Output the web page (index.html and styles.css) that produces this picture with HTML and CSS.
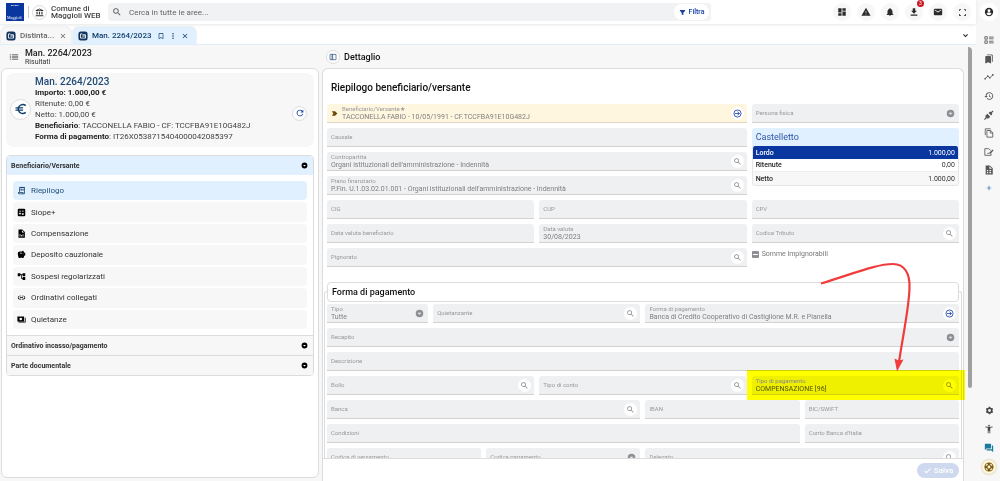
FILE: index.html
```html
<!DOCTYPE html>
<html lang="it">
<head>
<meta charset="utf-8">
<meta name="viewport" content="width=device-width, initial-scale=1">
<title>Man. 2264/2023</title>
<link rel="stylesheet" href="styles.css">
</head>
<body>
<svg class="sprite" aria-hidden="true">
  <symbol id="search" viewBox="0 0 24 24"><path d="M15.5 14h-.79l-.28-.27A6.47 6.47 0 0 0 16 9.5 6.5 6.5 0 1 0 9.5 16c1.61 0 3.09-.59 4.23-1.57l.27.28v.79l5 4.99L20.49 19zm-6 0a4.5 4.5 0 1 1 0-9 4.5 4.5 0 0 1 0 9z"/></symbol>
  <symbol id="bank" viewBox="0 0 24 24"><path d="M4 10v7h3v-7zm6.5 0v7h3v-7zM2 22h20v-3H2zM17 10v7h3v-7zM12 1 2 6v2h20V6zm0 2.3L17 6H7z"/></symbol>
  <symbol id="funnel" viewBox="0 0 24 24"><path d="M3 3h18v3l-6 7v8l-6-3v-5L3 6z"/></symbol>
  <symbol id="dash" viewBox="0 0 24 24"><path d="M3 13h8V3H3zm0 8h8v-6H3zm10 0h8V11h-8zm0-18v6h8V3z"/></symbol>
  <symbol id="warn" viewBox="0 0 24 24"><path d="M1 21h22L12 2zm12-3h-2v-2h2zm0-4h-2v-4h2z"/></symbol>
  <symbol id="bell" viewBox="0 0 24 24"><path d="M12 22a2 2 0 0 0 2-2h-4a2 2 0 0 0 2 2zm6-6v-5c0-3.07-1.64-5.64-4.5-6.32V4a1.5 1.5 0 0 0-3 0v.68C7.63 5.36 6 7.92 6 11v5l-2 2v1h16v-1z"/></symbol>
  <symbol id="download" viewBox="0 0 24 24"><path d="M19 9h-4V3H9v6H5l7 7zM4 18v3h16v-3z"/></symbol>
  <symbol id="mail" viewBox="0 0 24 24"><path d="M20 4H4a2 2 0 0 0-2 2v12c0 1.1.9 2 2 2h16a2 2 0 0 0 2-2V6a2 2 0 0 0-2-2zm0 4-8 5-8-5V6l8 5 8-5z"/></symbol>
  <symbol id="full" viewBox="0 0 24 24"><path d="M3 8V3h5v2H5v3zm13-5h5v5h-2V5h-3zM3 16h2v3h3v2H3zm16 0h2v5h-5v-2h3z"/></symbol>
  <symbol id="user" viewBox="0 0 24 24"><path d="M12 2a10 10 0 1 0 0 20 10 10 0 0 0 0-20zm0 3.500a3.500 3.500 0 1 1 0 7 3.500 3.500 0 0 1 0-7zm0 14c-2.500 0-4.700-1.300-6-3.200 0-2 4-3.100 6-3.100s6 1.100 6 3.100a7.200 7.200 0 0 1-6 3.200z"/></symbol>
  <symbol id="folder" viewBox="0 0 24 24"><rect x="1" y="1" width="22" height="22" rx="6" fill="#12355f"/><path fill="none" stroke="#fff" stroke-width="2" d="M6 7h4l2 2h6v8H6zM10 12h8"/></symbol>
  <symbol id="close" viewBox="0 0 24 24"><path d="M19 6.400 17.600 5 12 10.600 6.400 5 5 6.400l5.600 5.600L5 17.600 6.400 19l5.600-5.600 5.600 5.600 1.400-1.400-5.600-5.600z"/></symbol>
  <symbol id="mark" viewBox="0 0 24 24"><path d="M17 3H7a2 2 0 0 0-2 2v16l7-3 7 3V5a2 2 0 0 0-2-2zm0 15-5-2.200L7 18V5h10z"/></symbol>
  <symbol id="more" viewBox="0 0 24 24"><circle cx="12" cy="5" r="2.200"/><circle cx="12" cy="12" r="2.200"/><circle cx="12" cy="19" r="2.200"/></symbol>
  <symbol id="chev" viewBox="0 0 24 24"><path d="M7.400 8 12 12.600 16.600 8 18.500 9.900 12 16.400 5.500 9.900z"/></symbol>
  <symbol id="list" viewBox="0 0 24 24"><path d="M2 6h3v2H2zm5 0h15v2H7zm-5 5h3v2H2zm5 0h15v2H7zm-5 5h3v2H2zm5 0h15v2H7z"/></symbol>
  <symbol id="euro" viewBox="0 0 24 24"><path d="M15 18.500c-2.500 0-4.700-1.400-5.800-3.500H15l1-2H8.600a6 6 0 0 1 0-2H15l1-2H9.200A6.500 6.500 0 0 1 15 5.500c1.600 0 3.100.6 4.200 1.600L21 5.300A9 9 0 0 0 6.500 9H3l-1 2h4.100a9 9 0 0 0 0 2H3l-1 2h4.500A9 9 0 0 0 21 18.700l-1.800-1.800a6.400 6.400 0 0 1-4.200 1.600z"/></symbol>
  <symbol id="refresh" viewBox="0 0 24 24"><path d="M17.650 6.350A8 8 0 1 0 19.730 14h-2.080A6 6 0 1 1 12 6c1.660 0 3.140.69 4.220 1.780L13 11h7V4z"/></symbol>
  <symbol id="cdown" viewBox="0 0 24 24"><path fill-rule="evenodd" d="M12 2a10 10 0 1 0 0 20 10 10 0 0 0 0-20zM7 10h10l-5 5z"/></symbol>
  <symbol id="receipt" viewBox="0 0 24 24"><path d="M19.500 3.500 18 2l-1.500 1.500L15 2l-1.500 1.500L12 2l-1.500 1.500L9 2 7.500 3.500 6 2v14H3v3a3 3 0 0 0 3 3h12a3 3 0 0 0 3-3V2zM15 20H6a1 1 0 0 1-1-1v-1h10zm4-1a1 1 0 0 1-2 0v-3H8V5h11zM9 7h6v2H9zm7 0h2v2h-2zm-7 3h6v2H9zm7 0h2v2h-2z"/></symbol>
  <symbol id="calc" viewBox="0 0 24 24"><path fill-rule="evenodd" d="M5 2h14a3 3 0 0 1 3 3v14a3 3 0 0 1-3 3H5a3 3 0 0 1-3-3V5a3 3 0 0 1 3-3zm1 5v2h5V7zm7 0v2h5V7zm0 6v2h5v-2zm0 3v2h5v-2zm-6-4v2H5v2h2v2h2v-2h2v-2H9v-2z"/></symbol>
  <symbol id="report" viewBox="0 0 24 24"><path fill-rule="evenodd" d="M4 1h10l7 7v15H4zm9 2v6h6zM7 13v7h2v-7zm4 3v4h2v-4zm4-2v6h2v-6z"/></symbol>
  <symbol id="pig" viewBox="0 0 24 24"><path fill-rule="evenodd" d="m19.800 7.500-2.300-2.300c.1-.6.300-1.200.5-1.700A1.500 1.500 0 0 0 16.500 2c-1.600 0-3 .8-4 2h-5C4.500 4 2 6.500 2 9.500S4.500 21 4.500 21H10v-2h2v2h5.500l1.700-5.600 2.800-.9v-7zM13 9H8V7h5zm3 2a1 1 0 1 1 0-2 1 1 0 0 1 0 2z"/></symbol>
  <symbol id="tree" viewBox="0 0 24 24"><path d="M22 11V3h-7v3H9V3H2v8h7V8h2v10h4v3h7v-8h-7v3h-2V8h2v3z"/></symbol>
  <symbol id="link" viewBox="0 0 24 24"><path d="M3.900 12A3.100 3.100 0 0 1 7 8.900h4V7H7a5 5 0 0 0 0 10h4v-1.900H7A3.100 3.100 0 0 1 3.900 12zM8 13h8v-2H8zm9-6h-4v1.900h4a3.100 3.100 0 0 1 0 6.200h-4V17h4a5 5 0 0 0 0-10z"/></symbol>
  <symbol id="cash" viewBox="0 0 24 24"><path fill-rule="evenodd" d="M1 4h18v13H1zm9 3a3.500 3.500 0 1 0 0 7 3.500 3.500 0 0 0 0-7zM21 7h2v13H4v-2h17z"/></symbol>
  <symbol id="panel" viewBox="0 0 24 24"><path fill="none" stroke="currentColor" stroke-width="2" d="M3 4h18v16H3zM9 4v16M11 4v16"/></symbol>
  <symbol id="tag" viewBox="0 0 24 24"><path d="M3 4h11l8 8-8 8H3l5-8z"/></symbol>
  <symbol id="go" viewBox="0 0 24 24"><path fill="none" stroke="currentColor" stroke-width="2.200" d="M12 2.500a9.500 9.500 0 1 1 0 19 9.500 9.500 0 0 1 0-19zM5 12h12M12 7l5 5-5 5"/></symbol>
  <symbol id="check" viewBox="0 0 24 24"><path d="M9 16.200 4.800 12l-1.800 1.800 6 6L21.500 7.300l-1.800-1.800z"/></symbol>
  <symbol id="ballot" viewBox="0 0 24 24"><path fill="none" stroke="currentColor" stroke-width="2" d="M2 4h6v6H2zM2 14h6v6H2zM12 5h11M12 9h11M12 15h11M12 19h11"/></symbol>
  <symbol id="marks" viewBox="0 0 24 24"><path d="m19 18 2 1V3a2 2 0 0 0-2-2H8.500a2 2 0 0 0-2 2H17a2 2 0 0 1 2 2zM15 5H5a2 2 0 0 0-2 2v16l7-3 7 3V7a2 2 0 0 0-2-2z"/></symbol>
  <symbol id="trend" viewBox="0 0 24 24"><path fill="none" stroke="currentColor" stroke-width="2" d="m2 17 7-7 5 4 8-8"/><circle cx="3" cy="16" r="2"/><circle cx="9" cy="10" r="2"/><circle cx="14" cy="14" r="2"/><circle cx="21" cy="7" r="2"/></symbol>
  <symbol id="hist" viewBox="0 0 24 24"><path d="M13 3a9 9 0 0 0-9 9H1l3.900 3.900L9 12H6a7 7 0 1 1 2.060 4.940l-1.420 1.420A9 9 0 1 0 13 3zm-1 5v5l4.280 2.540.72-1.210-3.500-2.080V8z"/></symbol>
  <symbol id="plug" viewBox="0 0 24 24"><path d="m21 1-4 4c-2-1-4-1-5 1l-1 1 6 6 1-1c2-1 2-3 1-5l4-4zM8 9l7 7-3 3c-2 2-4 2-6 1l-4 4-2-2 4-4c-1-2-1-4 1-6z"/></symbol>
  <symbol id="copy" viewBox="0 0 24 24"><path fill="none" stroke="currentColor" stroke-width="2" d="M3 17V2h13M7 6h9l5 5v11H7zM15 6v6h6"/></symbol>
  <symbol id="sign" viewBox="0 0 24 24"><path fill="none" stroke="currentColor" stroke-width="2" d="M17 16v4H2V4h9l5 4M8 16c2-4 3 2 5-2"/><path d="m13 13 8-7 2 2-7 8h-3z"/></symbol>
  <symbol id="filecode" viewBox="0 0 24 24"><path fill-rule="evenodd" d="M4 1h10l7 7v15H4zm9 2v6h6zM7 12v3h3v-3zm6 0v3h4v-3zm-6 5v3h3v-3zm6 0v3h4v-3z"/></symbol>
  <symbol id="plus" viewBox="0 0 24 24"><path d="M19 13h-6v6h-2v-6H5v-2h6V5h2v6h6z"/></symbol>
  <symbol id="gear" viewBox="0 0 24 24"><path fill="none" stroke="currentColor" stroke-width="4.500" d="M12 6a6 6 0 1 1 0 12 6 6 0 0 1 0-12z"/><path fill="none" stroke="currentColor" stroke-width="4" d="M12 2v3M12 19v3M3.300 7l2.600 1.500M18.100 15.500l2.600 1.500M3.300 17l2.600-1.500M18.100 8.500 20.700 7"/></symbol>
  <symbol id="access" viewBox="0 0 24 24"><path d="M20.500 6a36 36 0 0 1-17 0L3 8c1.860.5 4 .830 6 1v13h2v-6h2v6h2V9c2-.17 4.140-.5 6-1zM12 6a2 2 0 1 0 0-4 2 2 0 0 0 0 4z"/></symbol>
  <symbol id="chat" viewBox="0 0 24 24"><path d="M21 6h-2v9H6v2c0 .55.45 1 1 1h11l4 4V7a1 1 0 0 0-1-1zm-4 6V3a1 1 0 0 0-1-1H3a1 1 0 0 0-1 1v14l4-4h10a1 1 0 0 0 1-1z"/></symbol>
  <symbol id="life" viewBox="0 0 24 24"><path fill-rule="evenodd" d="M12 1a11 11 0 1 0 0 22 11 11 0 0 0 0-22zm0 7.500a3.500 3.500 0 1 1 0 7 3.500 3.500 0 0 1 0-7zM9 3.500v3L6.500 9h-3A9 9 0 0 1 9 3.500zm6 0A9 9 0 0 1 20.500 9h-3L15 6.500zM3.500 15h3L9 17.500v3A9 9 0 0 1 3.500 15zm17 0a9 9 0 0 1-5.500 5.500v-3l2.500-2.500z"/></symbol>
</svg>

<div class="app">
  <div class="main">
    <header class="topbar">
      <svg class="logo" viewBox="0 0 18 18" role="img" aria-label="Maggioli">
        <rect width="18" height="18" fill="#0a36a0"/>
        <path d="M5 2.500h8" stroke="#b9c7ea" stroke-width="1" stroke-dasharray="1 .3"/>
        <text x="1" y="16" class="logo-text">Maggioli</text>
      </svg>
      <span class="rule"></span>
      <span class="round outline"><svg class="i9"><use href="#bank"/></svg></span>
      <div class="tenant">Comune di<br>Maggioli WEB</div>
      <div class="search">
        <svg class="i10"><use href="#search"/></svg>
        <input type="search" aria-label="Cerca" placeholder="Cerca in tutte le aree...">
        <button class="filter"><svg class="i7"><use href="#funnel"/></svg>Filtra</button>
      </div>
      <nav class="actions">
        <button class="round" aria-label="Dashboard"><svg class="i10"><use href="#dash"/></svg></button>
        <button class="round" aria-label="Avvisi"><svg class="i10"><use href="#warn"/></svg></button>
        <button class="round" aria-label="Notifiche"><svg class="i10"><use href="#bell"/></svg></button>
        <button class="round" aria-label="Download"><svg class="i10"><use href="#download"/></svg><span class="badge">3</span></button>
        <button class="round" aria-label="Posta"><svg class="i10"><use href="#mail"/></svg></button>
        <button class="round" aria-label="Schermo intero"><svg class="i9"><use href="#full"/></svg></button>
      </nav>
    </header>

    <div class="tabs">
      <div class="tab"><svg class="i10"><use href="#folder"/></svg><span>Distinta...</span><button aria-label="Chiudi"><svg class="i8"><use href="#close"/></svg></button></div>
      <div class="tab active"><svg class="i10"><use href="#folder"/></svg><span>Man. 2264/2023</span><button aria-label="Segnalibro"><svg class="i8"><use href="#mark"/></svg></button><button aria-label="Altro"><svg class="i8"><use href="#more"/></svg></button><button aria-label="Chiudi"><svg class="i8"><use href="#close"/></svg></button></div>
      <button class="tab-menu" aria-label="Elenco schede"><svg class="i9"><use href="#chev"/></svg></button>
    </div>

    <div class="content">
      <section class="side">
        <header class="side-head">
          <svg class="i10"><use href="#list"/></svg>
          <div><h1>Man. 2264/2023</h1><p>Risultati</p></div>
        </header>
        <div class="panel side-panel">
          <div class="card">
            <span class="round big"><svg class="i14"><use href="#euro"/></svg></span>
            <div class="card-text">
              <h2>Man. 2264/2023</h2>
              <p><b>Importo: 1.000,00 €</b></p>
              <p>Ritenute: 0,00 €</p>
              <p>Netto: 1.000,00 €</p>
              <p><b>Beneficiario</b>: TACCONELLA FABIO - CF: TCCFBA91E10G482J</p>
              <p><b>Forma di pagamento</b>: IT26X0538715404000042085397</p>
            </div>
            <button class="round white" aria-label="Aggiorna"><svg class="i10"><use href="#refresh"/></svg></button>
          </div>
          <div class="accordion">
            <button class="acc-head open">Beneficiario/Versante<svg class="i7"><use href="#cdown"/></svg></button>
            <nav class="menu">
              <a href="#" class="current"><svg class="i9"><use href="#receipt"/></svg>Riepilogo</a>
              <a href="#"><svg class="i9"><use href="#calc"/></svg>Siope+</a>
              <a href="#"><svg class="i9"><use href="#report"/></svg>Compensazione</a>
              <a href="#"><svg class="i9"><use href="#pig"/></svg>Deposito cauzionale</a>
              <a href="#"><svg class="i9"><use href="#tree"/></svg>Sospesi regolarizzati</a>
              <a href="#"><svg class="i9"><use href="#link"/></svg>Ordinativi collegati</a>
              <a href="#"><svg class="i9"><use href="#cash"/></svg>Quietanze</a>
            </nav>
            <button class="acc-head">Ordinativo incasso/pagamento<svg class="i7"><use href="#cdown"/></svg></button>
            <button class="acc-head">Parte documentale<svg class="i7"><use href="#cdown"/></svg></button>
          </div>
        </div>
      </section>

      <section class="detail">
        <header class="detail-head">
          <button class="round white small" aria-label="Pannello"><svg class="i8"><use href="#panel"/></svg></button>
          <h1>Dettaglio</h1>
        </header>
        <div class="panel detail-panel">
          <div class="form-scroll">
            <h2 class="form-title">Riepilogo beneficiario/versante</h2>
            <div class="grid first">
              <div class="field s8 filled key"><svg class="lead i7"><use href="#tag"/></svg><label for="ben">Beneficiario/Versante★</label><input id="ben" disabled value="TACCONELLA FABIO - 10/05/1991 - CF.TCCFBA91E10G482J"><button class="fb go" aria-label="Apri"><svg class="i9"><use href="#go"/></svg></button></div>
              <div class="field s4"><label for="pf">Persona fisica</label><select id="pf" disabled><option></option></select><svg class="drop i9"><use href="#cdown"/></svg></div>
              <div class="field s8"><label for="cau">Causale</label><input id="cau" disabled></div>
              <div class="summary">
                <h3>Castelletto</h3>
                <table>
                  <tr class="lordo"><th scope="row">Lordo</th><td>1.000,00</td></tr>
                  <tr><th scope="row">Ritenute</th><td>0,00</td></tr>
                  <tr class="alt"><th scope="row">Netto</th><td>1.000,00</td></tr>
                </table>
              </div>
              <div class="field s8 filled"><label for="con">Contropartita</label><input id="con" disabled value="Organi istituzionali dell'amministrazione - Indennità"><button class="fb" aria-label="Cerca"><svg class="i9"><use href="#search"/></svg></button></div>
              <div class="field s8 filled"><label for="pia">Piano finanziario</label><input id="pia" disabled value="P.Fin. U.1.03.02.01.001 - Organi istituzionali dell'amministrazione - Indennità"><button class="fb" aria-label="Cerca"><svg class="i9"><use href="#search"/></svg></button></div>
              <div class="field s4"><label for="cig">CIG</label><input id="cig" disabled></div>
              <div class="field s4"><label for="cup">CUP</label><input id="cup" disabled></div>
              <div class="field s4"><label for="cpv">CPV</label><input id="cpv" disabled></div>
              <div class="field s4"><label for="dvb">Data valuta beneficiario</label><input id="dvb" disabled></div>
              <div class="field s4 filled"><label for="dv">Data valuta</label><input id="dv" disabled value="30/08/2023"></div>
              <div class="field s4"><label for="ct">Codice Tributo</label><input id="ct" disabled><button class="fb" aria-label="Cerca"><svg class="i9"><use href="#search"/></svg></button></div>
              <div class="field s8"><label for="pig2">Pignorato</label><input id="pig2" disabled><button class="fb" aria-label="Cerca"><svg class="i9"><use href="#search"/></svg></button></div>
              <label class="tick"><input type="checkbox" disabled>Somme impignorabili</label>
            </div>

            <section class="group">
              <h2>Forma di pagamento</h2>
              <div class="grid">
                <div class="field s2 filled"><label for="tipo">Tipo</label><select id="tipo" disabled><option>Tutte</option></select><svg class="drop i9"><use href="#cdown"/></svg></div>
                <div class="field s4"><label for="qui">Quietanzante</label><input id="qui" disabled><button class="fb" aria-label="Cerca"><svg class="i9"><use href="#search"/></svg></button></div>
                <div class="field s6 filled"><label for="fp">Forma di pagamento</label><input id="fp" disabled value="Banca di Credito Cooperativo di Castiglione M.R. e Pianella"><button class="fb go" aria-label="Apri"><svg class="i9"><use href="#go"/></svg></button></div>
                <div class="field s12"><label for="rec">Recapito</label><select id="rec" disabled><option></option></select><svg class="drop i9"><use href="#cdown"/></svg></div>
                <div class="field s12"><label for="des">Descrizione</label><input id="des" disabled></div>
                <div class="field s4"><label for="bol">Bollo</label><input id="bol" disabled><button class="fb" aria-label="Cerca"><svg class="i9"><use href="#search"/></svg></button></div>
                <div class="field s4"><label for="tc">Tipo di conto</label><input id="tc" disabled><button class="fb" aria-label="Cerca"><svg class="i9"><use href="#search"/></svg></button></div>
                <div class="field s4 filled strong"><label for="tp">Tipo di pagamento</label><input id="tp" disabled value="COMPENSAZIONE [96]"><button class="fb" aria-label="Cerca"><svg class="i9"><use href="#search"/></svg></button></div>
                <div class="field s6"><label for="ban">Banca</label><input id="ban" disabled><button class="fb" aria-label="Cerca"><svg class="i9"><use href="#search"/></svg></button></div>
                <div class="field s3"><label for="iban">IBAN</label><input id="iban" disabled></div>
                <div class="field s3"><label for="bic">BIC/SWIFT</label><input id="bic" disabled></div>
                <div class="field s9"><label for="cond">Condizioni</label><input id="cond" disabled></div>
                <div class="field s3"><label for="cbi">Conto Banca d'Italia</label><input id="cbi" disabled></div>
                <div class="field s3"><label for="cv">Codice di versamento</label><input id="cv" disabled></div>
                <div class="field s3"><label for="cp">Codice pagamento</label><select id="cp" disabled><option></option></select><svg class="drop i9"><use href="#cdown"/></svg></div>
                <div class="field s6"><label for="del">Delegato</label><input id="del" disabled><button class="fb" aria-label="Cerca"><svg class="i9"><use href="#search"/></svg></button></div>
              </div>
            </section>
          </div>
          <footer class="form-foot"><button class="save" disabled><svg class="i9"><use href="#check"/></svg>Salva</button></footer>
        </div>
      </section>
      <div class="scrollbar"></div>
    </div>
    <div class="highlight"></div>
    <svg class="arrow" viewBox="0 0 96 112"><path d="M2 23.500C36 13 58 4 74 4C86 4 91 14 90.500 28C90 48 84 75 80 102" fill="none" stroke="#f03c3c" stroke-width="2.200"/><path d="M75.500 98.500l4 2 5-1-6.500 12z" fill="#f03c3c"/></svg>
  </div>

  <aside class="rail">
    <button class="round white" aria-label="Profilo"><svg class="i10"><use href="#user"/></svg></button>
    <div class="rail-list tools">
      <button aria-label="Elenco"><svg class="i10"><use href="#ballot"/></svg></button>
      <button aria-label="Segnalibri"><svg class="i10"><use href="#marks"/></svg></button>
      <button aria-label="Andamento"><svg class="i10"><use href="#trend"/></svg></button>
      <button aria-label="Cronologia"><svg class="i10"><use href="#hist"/></svg></button>
      <button aria-label="Connessioni"><svg class="i10"><use href="#plug"/></svg></button>
      <button aria-label="Copia"><svg class="i10"><use href="#copy"/></svg></button>
      <button aria-label="Firma"><svg class="i10"><use href="#sign"/></svg></button>
      <button aria-label="File"><svg class="i10"><use href="#filecode"/></svg></button>
      <button class="blue" aria-label="Aggiungi"><svg class="i8"><use href="#plus"/></svg></button>
    </div>
    <div class="rail-list bottom">
      <button aria-label="Impostazioni"><svg class="i9"><use href="#gear"/></svg></button>
      <button aria-label="Accessibilità"><svg class="i10"><use href="#access"/></svg></button>
      <button class="teal" aria-label="Chat"><svg class="i10"><use href="#chat"/></svg></button>
      <button class="help" aria-label="Aiuto"><svg class="i10"><use href="#life"/></svg></button>
    </div>
  </aside>
</div>
</body>
</html>
```
FILE: styles.css
```css
* { box-sizing: border-box; }
body, h1, h2, h3, p { margin: 0; }
body, button, input, select { font-family: Roboto, "Liberation Sans", sans-serif; }
body { font-size: 8px; color: #333; background: #fff; }
button { border: 0; padding: 0; background: none; color: inherit; font-size: 8px; display: flex; align-items: center; justify-content: center; }
svg { fill: currentColor; flex: none; display: block; }
.sprite { width: 0; height: 0; position: absolute; }
.i7 { width: 7px; height: 7px; }
.i8 { width: 8px; height: 8px; }
.i9 { width: 9px; height: 9px; }
.i10 { width: 10px; height: 10px; }
.i14 { width: 14px; height: 14px; }

.app { display: flex; height: 100vh; overflow: hidden; }
.main { flex: 1; min-width: 0; display: flex; flex-direction: column; position: relative; }

.topbar { height: 24px; display: flex; align-items: center; padding: 0 6px; box-shadow: 0 1px 3px #e4e6e8; }
.logo { width: 18px; height: 18px; }
.logo-text { font: 4px "Liberation Serif", serif; fill: #fff; }
.rule { width: 1px; height: 12px; background: #ccc; margin: 0 3px 0 4px; }
.round { width: 18px; height: 18px; border-radius: 50%; background: #f7f7f7; display: flex; align-items: center; justify-content: center; color: #2b2b2b; position: relative; }
.outline { width: 15px; height: 15px; border: 1px solid #ddd; background: #fff; }
.white { background: #fff; }
.tenant { font-size: 8px; line-height: 7px; font-weight: 500; margin-left: 4px; width: 57px; white-space: nowrap; color: #444; }
.search { flex: 1; height: 18px; background: #f0f2f3; border-radius: 3px; display: flex; align-items: center; padding: 0 2px 0 4px; color: #555; max-width: 603px; }
.search input { flex: 1; border: 0; background: none; font-size: 8px; padding: 0; margin-left: 7px; outline: 0; }
.search input::placeholder { color: #666; opacity: 1; }
.filter { height: 16px; width: 35px; gap: 3px; border-radius: 8px; background: #fff; color: #1740a0; font-size: 7px; font-weight: 500; }
.actions { display: flex; gap: 6px; margin: 0 -1px 0 auto; }
.badge { position: absolute; top: -3px; right: -1px; width: 7px; height: 7px; border-radius: 50%; background: #cc1626; color: #fff; font-size: 5px; line-height: 7px; }

.tabs { display: flex; align-items: flex-end; height: 21px; gap: 2px; padding: 0 6px 0 1px; border-bottom: 1px solid #e0eefa; }
.tab { height: 17px; display: flex; align-items: center; gap: 4px; padding: 0 4px 0 5px; background: #f7f7f7; border-radius: 6px 6px 0 0; box-shadow: 0 0 2px #ccc; clip-path: inset(-3px -3px 0); font-size: 8px; color: #666; font-weight: 500; }
.tab span { width: 35px; white-space: nowrap; }
.tab.active { background: #e0f0ff; color: #12406e; padding-right: 7px; }
.tab.active span { width: auto; margin-right: 2px; }
.tab-menu { margin-left: auto; height: 17px; color: #222; }

.content { flex: 1; min-height: 0; display: flex; background: #f7f7f7; padding-left: 1px; }
.side { width: 318px; display: flex; flex-direction: column; padding-bottom: 3px; }
.side-head { display: flex; align-items: center; gap: 6px; height: 23px; padding-left: 8px; color: #333; }
.side-head h1 { font-size: 9px; line-height: 10px; font-weight: 500; color: #222; }
.side-head p { font-size: 7px; line-height: 8px; }
.panel { background: #fff; border: 1px solid #dcdcdc; }
.side-panel { flex: 1; border-radius: 6px; padding: 4px; }
.card { background: #f7f7f7; border-radius: 8px; height: 74px; display: flex; align-items: center; padding: 0 7px 2px 4px; }
.big { width: 21px; height: 21px; background: #fff; border: 1px solid #ddd; color: #12406e; }
.card-text { flex: 1; margin-left: 4px; font-size: 8px; line-height: 11px; color: #444; }
.card-text h2 { font-size: 10px; line-height: 11px; font-weight: 500; color: #204a75; }
.card-text b { font-weight: 700; color: #222; }
.card .white { width: 15px; height: 15px; border: 1px solid #ddd; color: #1740a0; margin-top: 8px; }
.accordion { margin-top: 8px; border: 1px solid #dcdcdc; border-radius: 4px; overflow: hidden; }
.acc-head { width: 100%; height: 20px; justify-content: space-between; padding: 0 5px 0 4px; background: #f7f7f7; font-size: 7px; font-weight: 700; color: #333; border-top: 1px solid #dcdcdc; }
.acc-head svg { color: #000; }
.acc-head.open { height: 19px; background: #e0f0ff; border-top: 0; }
.menu { display: grid; grid-auto-rows: 1fr; gap: 2px; min-height: 160px; padding: 6px; }
.menu a { display: flex; align-items: center; gap: 5px; padding-left: 4px; border-radius: 4px; background: #f7f7f7; font-size: 8px; color: #333; text-decoration: none; }
.menu svg { color: #000; }
.menu .current { background: #e0f0ff; color: #24517c; }
.menu .current svg { color: #12406e; }

.detail { flex: 1; min-width: 0; display: flex; flex-direction: column; margin-left: 3px; }
.detail-head { display: flex; align-items: center; gap: 4px; height: 23px; padding-left: 4px; }
.detail-head h1 { font-size: 9px; font-weight: 500; color: #111; }
.small { width: 14px; height: 14px; border: 1px solid #ddd; color: #204a75; }
.detail-panel { flex: 1; min-height: 0; border-radius: 6px 6px 0 0; border-bottom: 0; display: flex; flex-direction: column; }
.form-scroll { flex: 1; min-height: 0; overflow: hidden; padding: 0 1px; }
.form-title { font-size: 10px; line-height: 12px; font-weight: 500; color: #111; padding: 13px 7px 10px; }
.grid { display: grid; grid-template-columns: repeat(12, minmax(0, 1fr)); grid-auto-rows: 19px; gap: 5px; }
.first { padding: 0 3px; }
.s2 { grid-column: span 2; }
.s3 { grid-column: span 3; }
.s4 { grid-column: span 4; }
.s6 { grid-column: span 6; }
.s8 { grid-column: span 8; }
.s9 { grid-column: span 9; }
.s12 { grid-column: span 12; }
.field { display: grid; grid-template-columns: auto minmax(0, 1fr) auto; grid-template-rows: 8px 8px; align-items: center; padding: 1px 3px 0 4px; background: #eff0f1; border-bottom: 1px solid #cfd1d2; border-radius: 3px 3px 0 0; color: #8c8c8c; }
.field label { grid-area: 1 / 2 / 3 / 3; font-size: 6px; line-height: 8px; color: #999; z-index: 1; }
.field input, .field select { grid-area: 1 / 2 / 3 / 3; width: 100%; height: 8px; border: 0; padding: 0; margin: 0; background: none; appearance: none; font-size: 7px; line-height: 8px; color: #808080; opacity: 1; }
.filled label { grid-row: 1 / 2; line-height: 6px; }
.filled input, .filled select { grid-row: 2 / 3; align-self: start; }
.field .fb, .drop { grid-area: 1 / 3 / 3 / 4; }
.fb { width: 13px; height: 13px; border-radius: 50%; background: #fff; color: #8a8a8a; }
.fb.go { color: #1740a0; }
.drop { margin-right: 1px; color: #8d8f94; }
.lead { grid-area: 1 / 1 / 3 / 2; margin-right: 4px; color: #6e4a08; }
.key { background: #fff6df; border-color: #ddd5c2; }
.strong input { color: #555; }
.strong label { color: #888; }
.summary { grid-column: 9 / 13; grid-row: 2 / 5; background: #e0f0ff; border-radius: 3px; height: 57px; }
.summary h3 { font-size: 9px; line-height: 18px; font-weight: 400; color: #2d56a5; padding-left: 4px; }
.summary table { width: 100%; border-spacing: 0; border-collapse: separate; background: #fff; font-size: 7px; border: 1px solid #e6e6e6; border-top: 0; border-radius: 3px; overflow: hidden; }
.summary th, .summary td { height: 13px; padding: 0 3px; text-align: left; font-weight: 500; color: #222; border-bottom: 1px solid #eee; }
.summary td { text-align: right; font-weight: 400; color: #333; }
.summary .lordo th, .summary .lordo td { background: #0a36a0; color: #fff; border: 0; }
.summary .alt th, .summary .alt td { background: #f7f7f7; border: 0; }
.tick { grid-column: span 4; display: flex; align-items: center; gap: 3px; font-size: 7px; color: #777; height: 12px; }
.tick input { appearance: none; width: 7px; height: 7px; margin: 0; border-radius: 1px; background: linear-gradient(#fff, #fff) center / 5px 1px no-repeat #8d8f94; }
.group { margin-top: 24px; border: 1px solid #dcdcdc; border-radius: 3px; border-bottom: 0; padding: 0 2px; }
.group h2 { margin: -10px 0 2px; height: 20px; border: 1px solid #dcdcdc; border-radius: 4px; background: #fff; font-size: 9px; line-height: 18px; font-weight: 500; color: #111; padding-left: 4px; }
.form-foot { height: 23px; border-top: 1px solid #dcdcdc; display: flex; align-items: center; justify-content: flex-end; padding-right: 4px; }
.save { width: 42px; height: 15px; gap: 2px; border-radius: 8px; background: #ced8ee; color: #fff; font-weight: 500; }
.scrollbar { width: 4px; height: 341px; margin: 2px 4px 0; background: #a0a0a0; border-radius: 0 4px 2px 2px; }
.highlight { position: absolute; right: 11px; top: 370px; width: 218px; height: 30px; background: #ff0; mix-blend-mode: multiply; }
.arrow { position: absolute; right: 61px; top: 260px; width: 96px; height: 112px; }

.rail { width: 24px; background: #f7f7f7; display: flex; flex-direction: column; align-items: center; padding: 3px 0 5px 2px; }
.rail-list { display: flex; flex-direction: column; align-items: center; margin-top: 10px; color: #555; }
.rail-list button { width: 18px; height: 18px; }
.rail-list .blue { height: 15px; color: #1f5fa8; }
.tools { min-height: 164px; justify-content: space-between; }
.bottom { margin-top: auto; gap: 1px; color: #444; }
.bottom .teal { color: #187a9c; }
.bottom .help { width: 14px; height: 14px; margin: 2px 0; border-radius: 50%; background: #fff6df; color: #7a5a0c; box-shadow: 0 0 1px 1px #e5dcc2; }
```
